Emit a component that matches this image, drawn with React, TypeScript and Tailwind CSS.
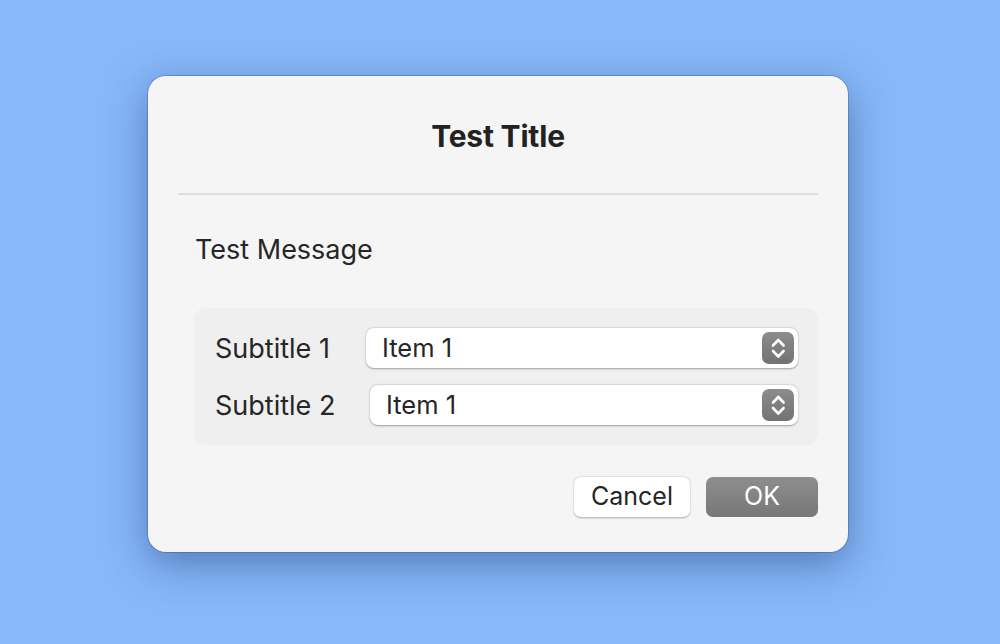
import React from 'react';

const Stepper = () => (
  <div className="h-8 w-8 rounded-[7px] bg-gradient-to-b from-[#8c8c8c] to-[#737373]">
    <svg width="32" height="32" viewBox="0 0 32 32" fill="none" stroke="white" strokeWidth="2.6" strokeLinecap="round" strokeLinejoin="round">
      <path d="M11 13.5 L16.3 8 L21.6 13.5" />
      <path d="M11 19 L16.3 24.5 L21.6 19" />
    </svg>
  </div>
);

const SelectRow = ({ label, wide }: { label: string; wide?: boolean }) => (
  <div className="flex items-center">
    <span className={`shrink-0 text-[27px] leading-none text-[#262626] ${wide ? 'w-[155px]' : 'w-[151px]'}`}>{label}</span>
    <div className="flex h-10 flex-1 items-center justify-between rounded-[8px] bg-white pl-4 pr-1 shadow-[0_0.5px_2px_rgba(0,0,0,0.35)]">
      <span className="text-[25.5px] leading-none text-[#262626]">Item 1</span>
      <Stepper />
    </div>
  </div>
);

export default function App() {
  return (
    <div
      className="flex h-[644px] w-[1000px] items-start bg-[#88b8f9] pl-[148px] pt-[76px]"
      style={{ fontFamily: 'Inter, "Noto Sans", sans-serif' }}
    >
      <div className="flex h-[476px] w-[700px] flex-col rounded-[18px] bg-[#f5f5f5] px-[30px] shadow-[0_12px_40px_rgba(30,60,120,0.5),0_0_0_1px_rgba(60,90,140,0.35)]">
        <h1 className="pt-[45px] text-center text-[30px] font-bold leading-none tracking-[-0.2px] text-[#222]">Test Title</h1>
        <div className="mt-[42px] h-[2px] bg-[#dddddd]" />
        <p className="mt-[41px] pl-[17px] text-[27px] leading-none text-[#262626]">Test Message</p>
        <div className="mt-[45px] ml-4 flex flex-col gap-[17px] rounded-[12px] bg-[#efefef] py-5 pl-[21px] pr-5">
          <SelectRow label="Subtitle 1" />
          <SelectRow label="Subtitle 2" wide />
        </div>
        <div className="mt-8 flex justify-end gap-4">
          <button className="h-10 w-[116px] rounded-[7px] bg-white text-[25px] text-[#262626] shadow-[0_0.5px_2px_rgba(0,0,0,0.3)]">Cancel</button>
          <button className="h-10 w-[112px] rounded-[7px] bg-gradient-to-b from-[#8e8e8e] to-[#777777] text-[25px] text-white">OK</button>
        </div>
      </div>
    </div>
  );
}
